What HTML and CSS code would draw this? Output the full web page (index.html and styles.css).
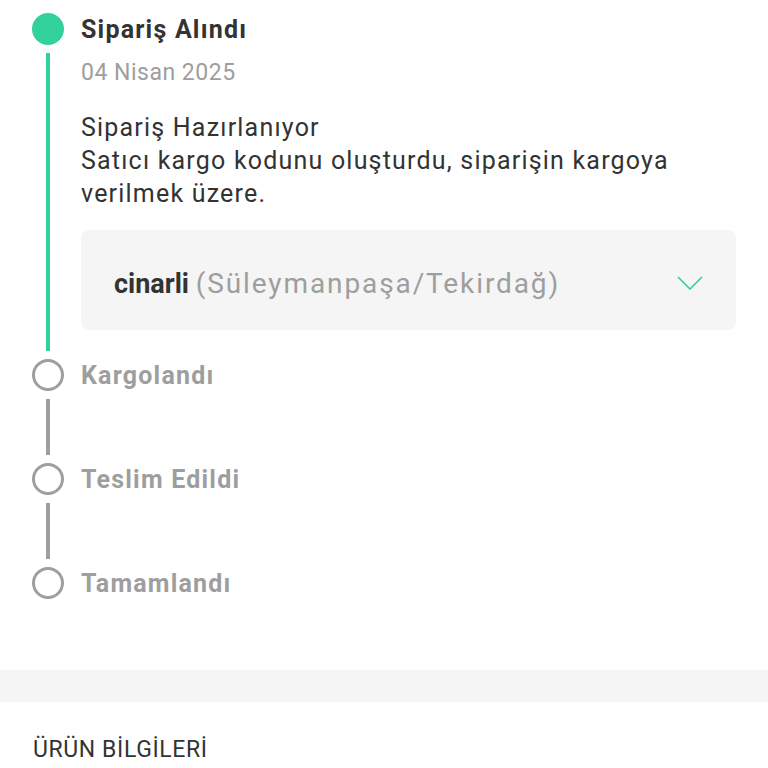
FILE: index.html
```html
<!DOCTYPE html>
<html lang="tr">
  <head>
    <meta charset="UTF-8" />
    <meta name="viewport" content="width=device-width, initial-scale=1.0" />
    <title>Sipariş Durumu</title>
    <link rel="stylesheet" href="styles.css">
  </head>
  <body>
    <div class="timeline">
      <div class="step done">
        <div class="marker">
          <span class="dot"></span>
          <span class="line"></span>
        </div>
        <div class="content">
          <h2 class="step-title">Sipariş Alındı</h2>
          <p class="date">04 Nisan 2025</p>
          <p class="desc">Sipariş Hazırlanıyor<br>Satıcı kargo kodunu oluşturdu, siparişin kargoya verilmek üzere.</p>
          <div class="address">
            <span class="addr-text"><b>cinarli</b> <span class="muted">(Süleymanpaşa/Tekirdağ)</span></span>
            <svg class="chevron" width="26" height="14" viewBox="0 0 26 14">
              <path d="M1 1 L13 13 L25 1" fill="none" stroke="#32d19c" stroke-width="1.6"/>
            </svg>
          </div>
        </div>
      </div>

      <div class="step">
        <div class="marker">
          <span class="dot"></span>
          <span class="line"></span>
        </div>
        <div class="content">
          <h2 class="step-title">Kargolandı</h2>
        </div>
      </div>

      <div class="step">
        <div class="marker">
          <span class="dot"></span>
          <span class="line"></span>
        </div>
        <div class="content">
          <h2 class="step-title">Teslim Edildi</h2>
        </div>
      </div>

      <div class="step last">
        <div class="marker">
          <span class="dot"></span>
        </div>
        <div class="content">
          <h2 class="step-title">Tamamlandı</h2>
        </div>
      </div>
    </div>

    <div class="divider"></div>

    <h3 class="section-title">ÜRÜN BİLGİLERİ</h3>
  </body>
</html>
```

FILE: styles.css
```css
* {
  padding: 0;
  margin: 0;
  box-sizing: border-box;
}

body {
  font-family: Roboto, "Noto Sans", Arial, sans-serif;
  background-color: #fff;
  color: #333;
}

.timeline {
  padding: 13px 32px 70px 32px;
}

.step {
  display: flex;
  gap: 17px;
  min-height: 104px;
}

.step.last {
  min-height: 32px;
}

.marker {
  width: 32px;
  display: flex;
  flex-direction: column;
  align-items: center;
}

.dot {
  width: 32px;
  height: 32px;
  border-radius: 50%;
  border: 3px solid #9e9e9e;
  flex-shrink: 0;
}

.line {
  flex: 1;
  width: 4px;
  margin: 8px 0;
  background-color: #9e9e9e;
}

.done .dot {
  background-color: #32d19c;
  border-color: #32d19c;
}

.done .line {
  background-color: #32d19c;
}

.content {
  flex: 1;
}

.done .content {
  padding-bottom: 29px;
}

.step-title {
  font-size: 25px;
  line-height: 33px;
  letter-spacing: 1.2px;
  font-weight: 700;
  color: #9e9e9e;
}

.done .step-title {
  color: #333;
}

.date {
  margin-top: 11px;
  font-size: 23px;
  line-height: 32px;
  letter-spacing: 0.5px;
  color: #9e9e9e;
}

.desc {
  margin-top: 22px;
  font-size: 25px;
  line-height: 33px;
  letter-spacing: 1.2px;
  color: #333;
  max-width: 620px;
}

.address {
  margin-top: 20px;
  height: 100px;
  background-color: #f5f5f5;
  border-radius: 8px;
  padding: 6px 33px 0 33px;
  display: flex;
  align-items: center;
  justify-content: space-between;
}

.addr-text {
  font-size: 27px;
  color: #333;
}

.addr-text b {
  font-weight: 700;
}

.muted {
  font-size: 28px;
  letter-spacing: 1.9px;
  color: #9e9e9e;
}

.divider {
  height: 32px;
  background-color: #f5f5f5;
}

.section-title {
  padding: 34px 33px;
  font-size: 23px;
  letter-spacing: 0.6px;
  font-weight: 400;
  color: #333;
}
```
